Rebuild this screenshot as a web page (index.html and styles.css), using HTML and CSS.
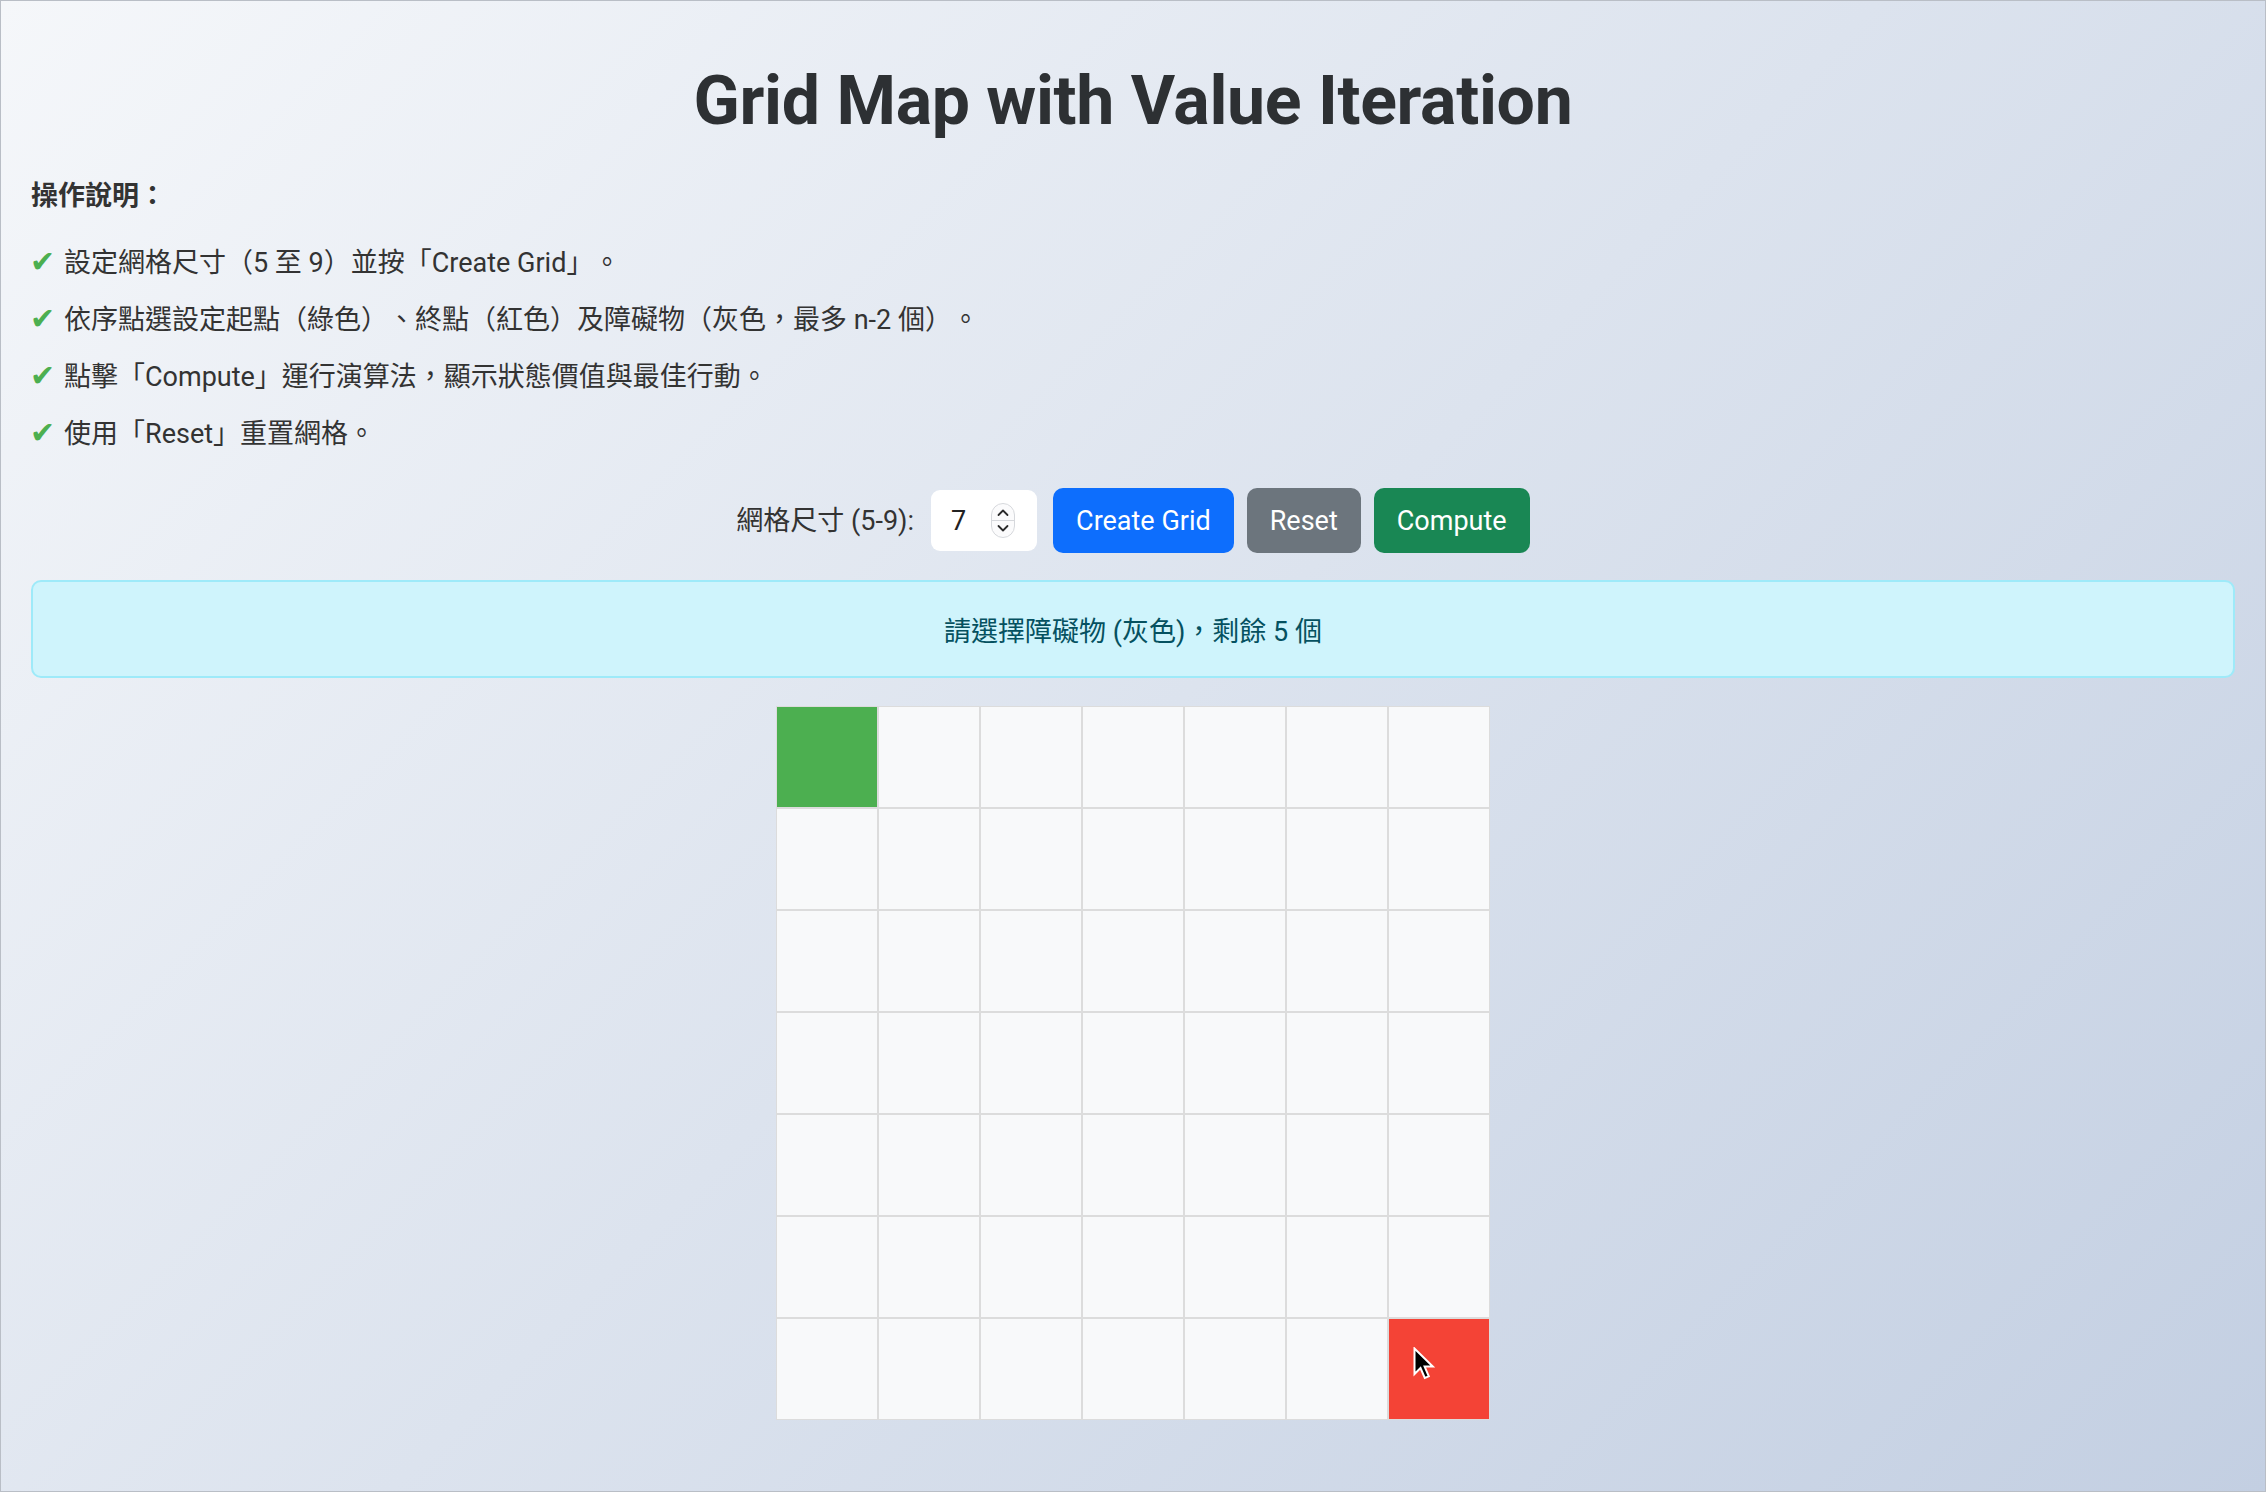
FILE: index.html
```html
<!DOCTYPE html>
<html lang="zh-Hant">
<head>
<meta charset="utf-8">
<title>Grid Map with Value Iteration</title>
<link rel="stylesheet" href="styles.css">
</head>
<body>
<div class="frame">
  <div class="container">
    <h1 class="title">Grid Map with Value Iteration</h1>

    <p class="help-heading">操作說明：</p>
    <ul class="help-list">
      <li><span class="check">✔</span>設定網格尺寸（5 至 9）並按「Create Grid」。</li>
      <li><span class="check">✔</span>依序點選設定起點（綠色）、終點（紅色）及障礙物（灰色，最多 n-2 個）。</li>
      <li><span class="check">✔</span>點擊「Compute」運行演算法，顯示狀態價值與最佳行動。</li>
      <li><span class="check">✔</span>使用「Reset」重置網格。</li>
    </ul>

    <div class="controls">
      <label class="size-label" for="gridSize">網格尺寸 (5-9):</label>
      <div class="size-input">
        <input id="gridSize" class="size-value" type="text" value="7">
        <svg class="stepper" width="24" height="35" viewBox="0 0 24 35" aria-hidden="true">
          <rect x="0.5" y="0.5" width="23" height="34" rx="11.5" fill="#fbfbfc" stroke="#d6d8dc"/>
          <line x1="1" y1="17.5" x2="23" y2="17.5" stroke="#d6d8dc"/>
          <path d="M7.5 12 L12 7.5 L16.5 12" fill="none" stroke="#2b2b2b" stroke-width="1.8" stroke-linecap="round" stroke-linejoin="round"/>
          <path d="M7.5 23 L12 27.5 L16.5 23" fill="none" stroke="#2b2b2b" stroke-width="1.8" stroke-linecap="round" stroke-linejoin="round"/>
        </svg>
      </div>
      <button class="btn btn-primary">Create Grid</button>
      <button class="btn btn-secondary">Reset</button>
      <button class="btn btn-success">Compute</button>
    </div>

    <div class="alert">請選擇障礙物 (灰色)，剩餘 5 個</div>

    <div class="grid">
      <div class="cell start"></div><div class="cell"></div><div class="cell"></div><div class="cell"></div><div class="cell"></div><div class="cell"></div><div class="cell"></div>
      <div class="cell"></div><div class="cell"></div><div class="cell"></div><div class="cell"></div><div class="cell"></div><div class="cell"></div><div class="cell"></div>
      <div class="cell"></div><div class="cell"></div><div class="cell"></div><div class="cell"></div><div class="cell"></div><div class="cell"></div><div class="cell"></div>
      <div class="cell"></div><div class="cell"></div><div class="cell"></div><div class="cell"></div><div class="cell"></div><div class="cell"></div><div class="cell"></div>
      <div class="cell"></div><div class="cell"></div><div class="cell"></div><div class="cell"></div><div class="cell"></div><div class="cell"></div><div class="cell"></div>
      <div class="cell"></div><div class="cell"></div><div class="cell"></div><div class="cell"></div><div class="cell"></div><div class="cell"></div><div class="cell"></div>
      <div class="cell"></div><div class="cell"></div><div class="cell"></div><div class="cell"></div><div class="cell"></div><div class="cell"></div>
      <div class="cell end">
        <svg class="cursor" width="24" height="36" viewBox="0 0 24 36" aria-hidden="true">
          <path d="M1.5 1.5 L1.5 27 L7.5 21 L11.8 31 L15.8 29.3 L11.6 19.6 L19.8 19.6 Z" fill="#000" stroke="#fff" stroke-width="2" stroke-linejoin="miter"/>
        </svg>
      </div>
    </div>
  </div>
</div>
</body>
</html>
```

FILE: styles.css
```css
* { box-sizing: border-box; }

html, body {
  margin: 0;
  padding: 0;
}

body {
  font-family: Roboto, "Noto Sans CJK TC", sans-serif;
  color: #333333;
  background: linear-gradient(135deg, #f5f7fa 0%, #c3cfe2 100%);
  min-height: 100vh;
  text-spacing-trim: space-all;
}

.frame {
  min-height: 100vh;
  border: 1px solid #b9bec6;
}

.container {
  padding: 0 30px 40px;
}

.title {
  margin: 59px 0 0;
  font-size: 68px;
  line-height: 82px;
  font-weight: 700;
  text-align: center;
  color: #2d3033;
  letter-spacing: -0.3px;
}

.help-heading {
  margin: 34px 0 0;
  font-size: 27px;
  line-height: 40px;
  font-weight: 700;
}

.help-list {
  list-style: none;
  margin: 27px 0 0;
  padding: 0;
  font-size: 27px;
  line-height: 40px;
}

.help-list li {
  margin-bottom: 17px;
}

.help-list li:last-child {
  margin-bottom: 0;
}

.check {
  display: inline-block;
  font-family: "DejaVu Sans", sans-serif;
  color: #4caf50;
  font-size: 30px;
  line-height: 1;
  width: 34px;
  margin-left: -1px;
}

.controls {
  display: flex;
  justify-content: center;
  align-items: center;
  margin-top: 34px;
}

.size-label {
  font-size: 27px;
  line-height: 40px;
  margin-right: 17px;
}

.size-input {
  position: relative;
  width: 106px;
  height: 61px;
  background: #ffffff;
  border-radius: 9px;
  margin-right: 16px;
}

.size-value {
  width: 100%;
  height: 100%;
  border: none;
  background: transparent;
  padding: 0 0 0 20px;
  font-family: Roboto, sans-serif;
  font-size: 27px;
  color: #222222;
  outline: none;
}

.stepper {
  position: absolute;
  left: 60px;
  top: 13px;
}

.btn {
  height: 65px;
  border: none;
  border-radius: 10px;
  padding: 0 23px;
  font-family: Roboto, sans-serif;
  font-size: 27px;
  color: #ffffff;
  margin-right: 13px;
}

.btn:last-child { margin-right: 0; }

.btn-primary { background: #0d6efd; }
.btn-secondary { background: #6c757d; }
.btn-success { background: #198754; }

.alert {
  margin-top: 27px;
  height: 98px;
  display: flex;
  align-items: center;
  justify-content: center;
  background: #cff4fc;
  border: 2px solid #9eeaf9;
  border-radius: 10px;
  color: #055160;
  font-size: 27px;
}

.grid {
  margin: 28px auto 0;
  display: grid;
  grid-template-columns: repeat(7, 102px);
  grid-auto-rows: 102px;
  width: 714px;
}

.cell {
  border: 1px solid #dcdcdc;
  background: #f8f9fa;
}

.cell.start { background: #4caf50; }

.cell.end {
  background: #f44336;
  position: relative;
}

.cursor {
  position: absolute;
  left: 24px;
  top: 28px;
}
```
